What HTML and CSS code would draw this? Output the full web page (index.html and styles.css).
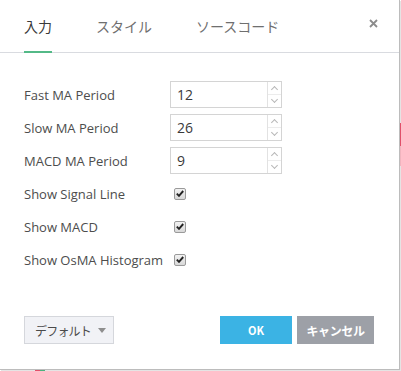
FILE: index.html
```html
<!DOCTYPE html>
<html lang="ja">
<head>
<meta charset="utf-8">
<link rel="stylesheet" href="styles.css">
</head>
<body>
<div class="dialog">
  <div class="tabs">
    <div class="tab active">入力</div>
    <div class="tab">スタイル</div>
    <div class="tab">ソースコード</div>
    <div class="close">
      <svg width="9" height="9" viewBox="0 0 9 9"><path d="M1 1 L8 8 M8 1 L1 8" stroke="#8c8c8c" stroke-width="1.8" fill="none"/></svg>
    </div>
  </div>
  <div class="content">
    <div class="label">Fast MA Period</div>
    <div class="field"><div class="num"><span class="val">12</span><span class="spin"><span class="up"></span><span class="down"></span></span></div></div>
    <div class="label">Slow MA Period</div>
    <div class="field"><div class="num"><span class="val">26</span><span class="spin"><span class="up"></span><span class="down"></span></span></div></div>
    <div class="label">MACD MA Period</div>
    <div class="field"><div class="num"><span class="val">9</span><span class="spin"><span class="up"></span><span class="down"></span></span></div></div>
    <div class="label">Show Signal Line</div>
    <div class="field"><span class="check"><svg width="8" height="7" viewBox="0 0 8 7"><path d="M0.8 3.6 L3 5.8 L7.2 1" stroke="#222" stroke-width="1.9" fill="none"/></svg></span></div>
    <div class="label">Show MACD</div>
    <div class="field"><span class="check"><svg width="8" height="7" viewBox="0 0 8 7"><path d="M0.8 3.6 L3 5.8 L7.2 1" stroke="#222" stroke-width="1.9" fill="none"/></svg></span></div>
    <div class="label">Show OsMA Histogram</div>
    <div class="field"><span class="check"><svg width="8" height="7" viewBox="0 0 8 7"><path d="M0.8 3.6 L3 5.8 L7.2 1" stroke="#222" stroke-width="1.9" fill="none"/></svg></span></div>
  </div>
  <div class="footer">
    <div class="defaults"><span class="defaults-text">デフォルト</span><span class="caret"></span></div>
    <div class="actions">
      <div class="btn ok">OK</div>
      <div class="btn cancel">キャンセル</div>
    </div>
  </div>
</div>
<span class="chart-mark red-bar"></span>
<span class="chart-mark pink-bar"></span>
<span class="chart-mark bottom-red"></span>
<span class="chart-mark bottom-green"></span>
</body>
</html>
```
FILE: styles.css
```css
html, body {
  margin: 0;
  padding: 0;
  background: #ffffff;
}
body {
  position: relative;
  width: 401px;
  height: 371px;
  overflow: hidden;
  font-family: "Open Sans", "Noto Sans CJK JP", sans-serif;
  color: #4a4a4a;
}
.dialog {
  box-sizing: border-box;
  width: 400px;
  height: 370px;
  border-right: 1px solid #bcbcbc;
  border-bottom: 1px solid #bcbcbc;
  box-shadow: 1px 1px 0 #e4e4e4;
  display: flex;
  flex-direction: column;
}
.tabs {
  height: 52px;
  border-bottom: 1px solid #d9dbe0;
  display: flex;
  align-items: stretch;
  padding-left: 24px;
  gap: 44px;
  position: relative;
  flex: none;
}
.tab {
  position: relative;
  font-family: "Noto Sans CJK JP", sans-serif;
  font-size: 14px;
  line-height: 52px;
  color: #6f6f6f;
}
.tab.active {
  color: #3a3a3a;
}
.tab.active::after {
  content: "";
  position: absolute;
  left: 0;
  right: 0;
  bottom: -1px;
  height: 2px;
  background: #53b987;
}
.close {
  position: absolute;
  left: 369px;
  top: 19px;
  width: 9px;
  height: 9px;
  display: flex;
}
.content {
  padding: 28px 0 0 24px;
  display: grid;
  grid-template-columns: 146px auto;
  grid-auto-rows: 27px;
  row-gap: 6px;
  align-items: center;
}
.label {
  font-size: 13px;
  color: #4d4d4d;
}
.field {
  display: flex;
  align-items: center;
  height: 27px;
}
.num {
  width: 112px;
  height: 27px;
  box-sizing: border-box;
  border: 1px solid #d4d4d4;
  display: flex;
}
.val {
  flex: 1;
  padding-left: 6px;
  font-size: 14px;
  line-height: 25px;
  color: #3a3a3a;
}
.spin {
  width: 13px;
  border-left: 1px solid #e2e2e2;
  display: flex;
  flex-direction: column;
}
.spin span {
  flex: 1;
  position: relative;
}
.spin .up {
  border-bottom: 1px solid #ececec;
}
.spin .up::after, .spin .down::after {
  content: "";
  position: absolute;
  left: 4px;
  width: 4px;
  height: 4px;
  border-left: 1px solid #b8b8b8;
  border-top: 1px solid #b8b8b8;
}
.spin .up::after {
  top: 5px;
  transform: rotate(45deg);
}
.spin .down::after {
  top: 2px;
  transform: rotate(225deg);
}
.check {
  margin-left: 4px;
  width: 12px;
  height: 12px;
  box-sizing: border-box;
  border: 1px solid #9a9a9a;
  border-radius: 2px;
  background: linear-gradient(#f2f2f2, #d8d8d8);
  display: flex;
  align-items: center;
  justify-content: center;
}
.footer {
  margin-top: auto;
  padding: 0 25px 25px 24px;
  display: flex;
  justify-content: space-between;
  align-items: center;
}
.defaults {
  width: 90px;
  height: 28px;
  box-sizing: border-box;
  border: 1px solid #d5d7dc;
  background: #f1f2f6;
  display: flex;
  align-items: center;
  padding-left: 10px;
  gap: 7px;
  font-family: "Noto Sans CJK JP", sans-serif;
  font-size: 12px;
  color: #4a4a4a;
}
.defaults-text {
  letter-spacing: -0.8px;
}
.caret {
  width: 0;
  height: 0;
  border-left: 4px solid transparent;
  border-right: 4px solid transparent;
  border-top: 5px solid #8e8e8e;
}
.actions {
  display: flex;
  gap: 5px;
}
.btn {
  height: 28px;
  display: flex;
  align-items: center;
  justify-content: center;
  color: #ffffff;
  font-weight: bold;
  font-family: "Noto Sans CJK JP", sans-serif;
}
.ok {
  width: 72px;
  background: #3bb3e4;
  font-size: 11px;
}
.cancel {
  width: 77px;
  background: #9da0a7;
  font-size: 12px;
  letter-spacing: -0.4px;
}
.chart-mark {
  position: absolute;
  display: block;
}
.red-bar {
  left: 400px;
  top: 123px;
  width: 1px;
  height: 23px;
  background: #e0506a;
}
.pink-bar {
  left: 400px;
  top: 146px;
  width: 1px;
  height: 20px;
  background: #f0b4be;
}
.bottom-red {
  left: 35px;
  top: 370px;
  width: 5px;
  height: 1px;
  background: #e0506a;
}
.bottom-green {
  left: 40px;
  top: 370px;
  width: 5px;
  height: 1px;
  background: #4bb27d;
}
```
